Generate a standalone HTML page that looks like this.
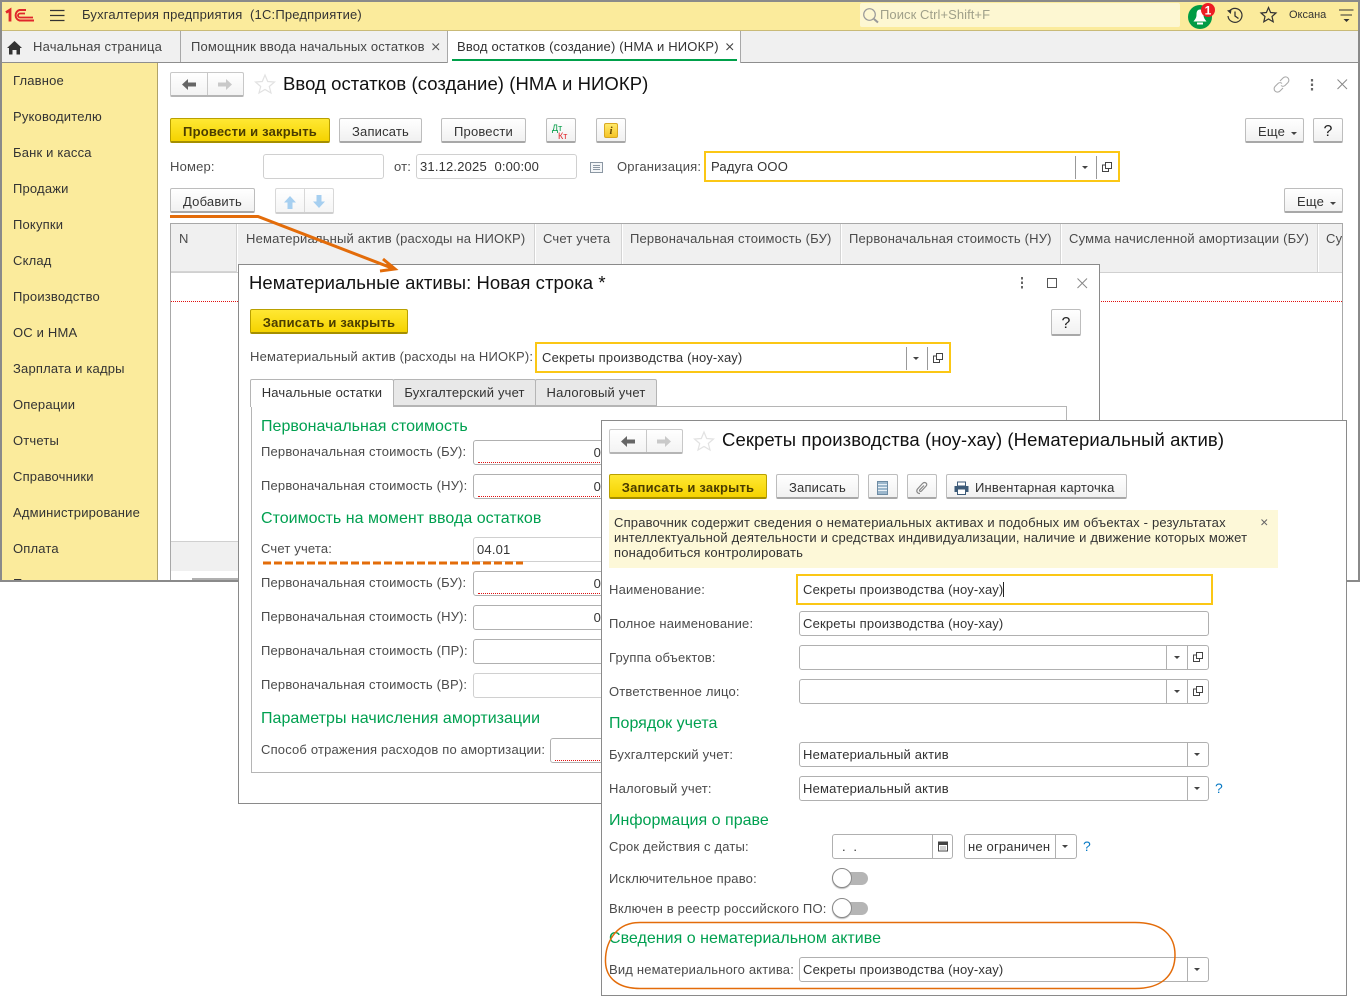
<!DOCTYPE html>
<html lang="ru"><head><meta charset="utf-8"><title>Ввод остатков</title>
<style>
html,body{margin:0;padding:0;background:#fff;width:1360px;height:998px;overflow:hidden}
*{box-sizing:border-box}
body{position:relative;font-family:"Liberation Sans",sans-serif;font-size:13px;color:#4b4b4b}
.a,.t,.b,.f,.h{position:absolute}
.t{white-space:nowrap;line-height:16px;height:16px;letter-spacing:.18px}
.dk{color:#333}
.h{white-space:nowrap;line-height:20px;font-size:16px;color:#00a050;letter-spacing:.02px}
.ti{position:absolute;white-space:nowrap;font-size:18.5px;line-height:24px;color:#111;letter-spacing:.07px}
.b{height:25px;border:1px solid #bdbdbd;border-bottom:2px solid #a8a8a8;border-radius:2px;background:linear-gradient(#fff,#f1f1f1);text-align:center;line-height:25px;color:#333;white-space:nowrap;letter-spacing:.18px}
.y{background:linear-gradient(#ffe833,#f5d300);border:1px solid #b9a000;border-bottom:2px solid #a58f00;font-weight:bold;color:#4a3c00;letter-spacing:.2px}
.f{height:25px;border:1px solid #b0b0b0;border-radius:3px;background:#fff;color:#333;line-height:23px;padding-left:3px;white-space:nowrap;letter-spacing:.18px;overflow:hidden}
.lt{border-color:#d0d0d0}
.foc{border:2px solid #fbc715;border-radius:0;height:31px;line-height:27px;padding-left:5px;background:#fff;position:absolute;color:#333;white-space:nowrap;letter-spacing:.18px}
.s{position:absolute;top:0;bottom:0;width:1px;background:#b0b0b0}
.ar{position:absolute;width:0;height:0;border-left:3px solid transparent;border-right:3px solid transparent;border-top:3px solid #444}
.red{position:absolute;left:4px;right:0;bottom:1px;border-bottom:1px dotted #e01010}
.th{position:absolute;top:224px;height:48px;background:#f0f0f0;border-right:1px solid #d4d4d4;border-left:1px solid #fff;color:#4b4b4b;line-height:16px;padding:7px 0 0 7px;white-space:nowrap;letter-spacing:.18px;overflow:hidden}
.q{color:#0a7ac4;font-size:14px}
.tg{position:absolute;width:36px;height:20px}
svg{position:absolute;overflow:visible}
</style></head><body>

<!-- main window -->
<div class="a" style="left:0;top:0;width:1360px;height:582px;overflow:hidden;background:#fff">
  <div class="a" style="left:0;top:0;width:1360px;height:31px;background:#fbeb9c;border-bottom:1px solid #c9ba77"></div>
  <svg style="left:0;top:0" width="40" height="30"><g fill="none" stroke="#e0262b"><path d="M6 12.500 10 10V21.500" stroke-width="2.800"/><path d="M26 10H19.500A5.500 5.500 0 0 0 19.500 20.500H34" stroke-width="2"/><path d="M25 13.500H20A2 2 0 0 0 20 17.500H33" stroke-width="1.800"/></g></svg>
  <svg style="left:50px;top:9px" width="15" height="13"><path d="M0 1.500H14.500M0 6.500H14.500M0 11.500H14.500" stroke="#333" stroke-width="1.200"/></svg>
  <div class="t dk" style="left:82px;top:7px">Бухгалтерия предприятия&nbsp; (1С:Предприятие)</div>
  <div class="a" style="left:860px;top:3px;width:320px;height:24px;background:#fdf7d2;border-radius:2px"></div>
  <svg style="left:862px;top:7px" width="18" height="17"><circle cx="7.500" cy="7.500" r="5.800" fill="none" stroke="#999" stroke-width="1.200"/><path d="M12 12 16 15.500" stroke="#999" stroke-width="2"/></svg>
  <div class="t" style="left:880px;top:7px;color:#a0a08a;letter-spacing:.06px">Поиск Ctrl+Shift+F</div>
  <svg style="left:1188px;top:2px" width="30" height="26"><circle cx="12" cy="15" r="12" fill="#009b45"/><path d="M12 7.500C9 7.500 8.500 10 8.500 13C8.500 16 6.500 18 5.500 19.500H18.500C17.500 18 15.500 16 15.500 13C15.500 10 15 7.500 12 7.500Z" fill="#fff"/><rect x="9" y="20.500" width="6" height="2" fill="#fff"/><circle cx="20" cy="8" r="7" fill="#ed1c24"/><text x="20" y="12.500" font-family="Liberation Sans" font-size="12" font-weight="bold" fill="#fff" text-anchor="middle">1</text></svg>
  <svg style="left:1226px;top:7px" width="18" height="17"><path d="M3.500 4A7 7 0 1 1 2 9" fill="none" stroke="#333" stroke-width="1.200"/><path d="M1 3.500 5.500 2.500 4.800 7Z" fill="#333"/><path d="M9 4.500V9L12.500 11.500" fill="none" stroke="#333" stroke-width="1.300"/></svg>
  <svg style="left:1260px;top:6px" width="17" height="17"><path d="M8.500 1.500 10.600 6.500 16 7 12 10.500 13.200 15.800 8.500 13 3.800 15.800 5 10.500 1 7 6.400 6.500Z" fill="none" stroke="#333" stroke-width="1.200"/></svg>
  <div class="t" style="left:1289px;top:7px;font-size:11px;color:#333;letter-spacing:0">Оксана</div>
  <svg style="left:1339px;top:9px" width="15" height="14"><path d="M0 1H14.500M1.500 6H13" stroke="#333" stroke-width="1.100"/><path d="M4.500 10H10.500L7.500 13Z" fill="#333"/></svg>

  <!-- tabs -->
  <div class="a" style="left:0;top:31px;width:1360px;height:32px;background:#f0f0f0;border-bottom:1px solid #8e8e8e"></div>
  <svg style="left:7px;top:41px" width="16" height="14"><path d="M7.500 0 15 7H13V13.500H9.500V9H5.500V13.500H2V7H0Z" fill="#333"/></svg>
  <div class="t" style="left:33px;top:39px;color:#444">Начальная страница</div>
  <div class="a" style="left:180px;top:31px;width:1px;height:31px;background:#a8a8a8"></div>
  <div class="t" style="left:191px;top:39px;color:#444">Помощник ввода начальных остатков</div>
  <svg style="left:432px;top:43px" width="8" height="8"><path d="M.5.500 7 7M7 .500.500 7" stroke="#555" stroke-width="1.100"/></svg>
  <div class="a" style="left:447px;top:31px;width:294px;height:32px;background:#fff;border-left:1px solid #a8a8a8;border-right:1px solid #a8a8a8"></div>
  <div class="t" style="left:457px;top:39px;color:#333">Ввод остатков (создание) (НМА и НИОКР)</div>
  <svg style="left:726px;top:43px" width="8" height="8"><path d="M.5.500 7 7M7 .500.500 7" stroke="#444" stroke-width="1.100"/></svg>
  <div class="a" style="left:452px;top:59px;width:285px;height:2px;background:#00a04a"></div>

  <!-- sidebar -->
  <div class="a" style="left:0;top:63px;width:158px;height:519px;background:#fbeb9c;border-right:1px solid #b1a368;overflow:hidden">
    <div class="t dk" style="left:13px;top:10px">Главное</div>
    <div class="t dk" style="left:13px;top:46px">Руководителю</div>
    <div class="t dk" style="left:13px;top:82px">Банк и касса</div>
    <div class="t dk" style="left:13px;top:118px">Продажи</div>
    <div class="t dk" style="left:13px;top:154px">Покупки</div>
    <div class="t dk" style="left:13px;top:190px">Склад</div>
    <div class="t dk" style="left:13px;top:226px">Производство</div>
    <div class="t dk" style="left:13px;top:262px">ОС и НМА</div>
    <div class="t dk" style="left:13px;top:298px">Зарплата и кадры</div>
    <div class="t dk" style="left:13px;top:334px">Операции</div>
    <div class="t dk" style="left:13px;top:370px">Отчеты</div>
    <div class="t dk" style="left:13px;top:406px">Справочники</div>
    <div class="t dk" style="left:13px;top:442px">Администрирование</div>
    <div class="t dk" style="left:13px;top:478px">Оплата</div>
    <div class="t dk" style="left:13px;top:513px">Подключаемое</div>
  </div>

  <!-- form header -->
  <div class="a" style="left:170px;top:72px;width:74px;height:25px;border:1px solid #c8c8c8;border-bottom:2px solid #b5b5b5;border-radius:2px;background:linear-gradient(#fff,#f3f3f3)"></div>
  <div class="a" style="left:207px;top:73px;width:1px;height:22px;background:#c8c8c8"></div>
  <svg style="left:182px;top:79px" width="14" height="11"><path d="M6 0V3.500H14V7.500H6V11L0 5.500Z" fill="#666"/></svg>
  <svg style="left:218px;top:79px" width="14" height="11"><path d="M8 0V3.500H0V7.500H8V11L14 5.500Z" fill="#c9c9c9"/></svg>
  <svg style="left:255px;top:74px" width="20" height="20"><path d="M10 1 12.700 7.500 19.500 8 14.300 12.500 16 19 10 15.500 4 19 5.700 12.500.5 8 7.300 7.500Z" fill="#fff" stroke="#e2e2e2" stroke-width="1.200"/></svg>
  <div class="ti" style="left:283px;top:72px">Ввод остатков (создание) (НМА и НИОКР)</div>
  <svg style="left:1273px;top:76px" width="17" height="17" fill="none" stroke="#aaa" stroke-width="1.100"><path d="M7 5 10 2A3 3 0 0 1 15 6.500L12 9.500A3 3 0 0 1 8 9.500"/><path d="M10 12 7 15A3 3 0 0 1 2 10.500L5 7.500A3 3 0 0 1 9 7.500"/></svg>
  <svg style="left:1310px;top:79px" width="4" height="12"><path d="M2 0V2.500M2 4.500V7M2 9V11.500" stroke="#666" stroke-width="2.200"/></svg>
  <svg style="left:1337px;top:79px" width="11" height="11"><path d="M.5.500 10 10M10 .500.500 10" stroke="#888"/></svg>

  <div class="b y" style="left:170px;top:118px;width:160px">Провести и закрыть</div>
  <div class="b" style="left:339px;top:118px;width:83px">Записать</div>
  <div class="b" style="left:441px;top:118px;width:85px">Провести</div>
  <div class="b" style="left:546px;top:118px;width:30px"></div>
  <div class="a" style="left:552px;top:124px;font-size:9px;line-height:8px;color:#009b45">Дт</div>
  <div class="a" style="left:558px;top:132px;font-size:9px;line-height:8px;color:#e0262b">Кт</div>
  <div class="b" style="left:596px;top:118px;width:30px"></div>
  <div class="a" style="left:604px;top:123px;width:14px;height:15px;border-radius:2px;background:linear-gradient(#ffe96a,#f5c427);border:1px solid #d8a821;text-align:center;font:italic bold 11px/14px 'Liberation Serif',serif;color:#6a4a00">i</div>
  <div class="b" style="left:1245px;top:118px;width:59px;text-align:left;padding-left:12px">Еще</div><div class="ar" style="left:1291px;top:132px"></div>
  <div class="b" style="left:1313px;top:118px;width:30px;font-size:16px;color:#222">?</div>

  <div class="t" style="left:170px;top:159px">Номер:</div>
  <div class="f lt" style="left:263px;top:154px;width:121px"></div>
  <div class="t" style="left:394px;top:159px">от:</div>
  <div class="f lt" style="left:416px;top:154px;width:161px">31.12.2025&nbsp; 0:00:00</div>
  <svg style="left:590px;top:162px" width="13" height="11"><rect x=".5" y=".5" width="12" height="10" fill="#f4f6f8" stroke="#8b97a3"/><path d="M3 3.500H10M3 5.500H10M3 7.500H10" stroke="#8b97a3"/></svg>
  <div class="t" style="left:617px;top:159px">Организация:</div>
  <div class="foc" style="left:704px;top:151px;width:416px">Радуга ООО
    <div class="a" style="left:369px;top:3px;width:1px;height:23px;background:#999"></div>
    <div class="a" style="left:390px;top:3px;width:1px;height:23px;background:#999"></div>
    <div class="ar" style="left:376px;top:13px"></div>
    <svg style="left:396px;top:9px" width="10" height="10" fill="none" stroke="#444"><rect x="3.500" y=".5" width="6" height="6"/><path d="M3 3H.5V9.500H6.500V7"/></svg>
  </div>

  <div class="b" style="left:170px;top:188px;width:85px">Добавить</div>
  <div class="a" style="left:275px;top:188px;width:59px;height:26px;border:1px solid #d8d8d8;border-bottom:2px solid #cfcfcf;border-radius:2px;background:linear-gradient(#fff,#f5f5f5)"></div>
  <div class="a" style="left:304px;top:189px;width:1px;height:23px;background:#d8d8d8"></div>
  <svg style="left:284px;top:196px" width="12" height="13"><path d="M6 0 12 6.500H8.500V13H3.500V6.500H0Z" fill="#a6cff0"/></svg>
  <svg style="left:313px;top:195px" width="12" height="13"><path d="M6 13 12 6.500H8.500V0H3.500V6.500H0Z" fill="#a6cff0"/></svg>
  <div class="b" style="left:1284px;top:188px;width:59px;text-align:left;padding-left:12px">Еще</div><div class="ar" style="left:1330px;top:202px"></div>

  <!-- table -->
  <div class="a" style="left:170px;top:223px;width:1173px;height:359px;border:1px solid #a8a8a8;border-bottom:0;overflow:hidden"></div>
  <div class="a" style="left:171px;top:224px;width:66px;height:48px;background:#f0f0f0;border-right:1px solid #d4d4d4;border-bottom:1px solid #d4d4d4;padding:7px 0 0 8px;line-height:16px;letter-spacing:.18px">N</div>
  <div class="th" style="left:237px;width:298px;padding-left:8px">Нематериальный актив (расходы на НИОКР)</div>
  <div class="th" style="left:535px;width:87px">Счет учета</div>
  <div class="th" style="left:622px;width:219px">Первоначальная стоимость (БУ)</div>
  <div class="th" style="left:841px;width:220px">Первоначальная стоимость (НУ)</div>
  <div class="th" style="left:1061px;width:257px">Сумма начисленной амортизации (БУ)</div>
  <div class="th" style="left:1318px;width:24px;border-right:0">Су</div>
  <div class="a" style="left:171px;top:272px;width:1171px;height:1px;background:#d0d0d0"></div>
  <div class="a" style="left:171px;top:301px;width:1171px;border-bottom:1px dotted #e01010"></div>
  <div class="a" style="left:171px;top:541px;width:68px;height:30px;background:#f0f0f0;border-top:1px solid #d0d0d0"></div>
  <div class="a" style="left:192px;top:578px;width:48px;height:3px;background:#b0b0b0"></div>

  <!-- window border -->
  <div class="a" style="left:0;top:0;width:1360px;height:582px;border:2px solid #8a8a8a;pointer-events:none"></div>
</div>

<!-- dialog 1 -->
<div class="a" style="left:238px;top:264px;width:862px;height:540px;background:#fff;border:1px solid #8a8a8a"></div>
<div class="ti" style="left:249px;top:271px">Нематериальные активы: Новая строка *</div>
<svg style="left:1020px;top:277px" width="4" height="12"><path d="M2 0V2.500M2 4.500V7M2 9V11.500" stroke="#666" stroke-width="2"/></svg>
<div class="a" style="left:1047px;top:278px;width:10px;height:10px;border:1px solid #555"></div>
<svg style="left:1077px;top:278px" width="11" height="11"><path d="M.5.500 10 10M10 .500.500 10" stroke="#888"/></svg>
<div class="b y" style="left:250px;top:309px;width:158px">Записать и закрыть</div>
<div class="b" style="left:1051px;top:309px;width:30px;height:27px;line-height:27px;font-size:16px;color:#222">?</div>
<div class="t" style="left:250px;top:349px">Нематериальный актив (расходы на НИОКР):</div>
<div class="foc" style="left:535px;top:342px;width:416px">Секреты производства (ноу-хау)
  <div class="a" style="left:369px;top:3px;width:1px;height:23px;background:#999"></div>
  <div class="a" style="left:390px;top:3px;width:1px;height:23px;background:#999"></div>
  <div class="ar" style="left:376px;top:13px"></div>
  <svg style="left:396px;top:9px" width="10" height="10" fill="none" stroke="#444"><rect x="3.500" y=".5" width="6" height="6"/><path d="M3 3H.5V9.500H6.500V7"/></svg>
</div>
<!-- tabs d1 -->
<div class="a" style="left:251px;top:406px;width:816px;height:367px;border:1px solid #b5b5b5"></div>
<div class="a" style="left:393px;top:379px;width:143px;height:27px;background:#e8e8e8;border:1px solid #b5b5b5;border-radius:2px 2px 0 0;line-height:25px;text-align:center;color:#333;letter-spacing:.18px">Бухгалтерский учет</div>
<div class="a" style="left:535px;top:379px;width:122px;height:27px;background:#e8e8e8;border:1px solid #b5b5b5;border-radius:2px 2px 0 0;line-height:25px;text-align:center;color:#333;letter-spacing:.18px">Налоговый учет</div>
<div class="a" style="left:250px;top:379px;width:144px;height:28px;background:#fff;border:1px solid #b5b5b5;border-bottom:0;border-radius:2px 2px 0 0;line-height:26px;text-align:center;color:#333;letter-spacing:.18px">Начальные остатки</div>

<div class="h" style="left:261px;top:417px">Первоначальная стоимость</div>
<div class="t" style="left:261px;top:444px">Первоначальная стоимость (БУ):</div>
<div class="f" style="left:473px;top:440px;width:140px;text-align:right;padding-right:11px">0<div class="red"></div></div>
<div class="t" style="left:261px;top:478px">Первоначальная стоимость (НУ):</div>
<div class="f" style="left:473px;top:474px;width:140px;text-align:right;padding-right:11px">0<div class="red"></div></div>
<div class="h" style="left:261px;top:509px">Стоимость на момент ввода остатков</div>
<div class="t" style="left:261px;top:541px">Счет учета:</div>
<div class="f lt" style="left:473px;top:537px;width:140px">04.01</div>
<div class="t" style="left:261px;top:575px">Первоначальная стоимость (БУ):</div>
<div class="f" style="left:473px;top:571px;width:140px;text-align:right;padding-right:11px">0<div class="red"></div></div>
<div class="t" style="left:261px;top:609px">Первоначальная стоимость (НУ):</div>
<div class="f" style="left:473px;top:605px;width:140px;text-align:right;padding-right:11px">0</div>
<div class="t" style="left:261px;top:643px">Первоначальная стоимость (ПР):</div>
<div class="f" style="left:473px;top:639px;width:140px"></div>
<div class="t" style="left:261px;top:677px">Первоначальная стоимость (ВР):</div>
<div class="f lt" style="left:473px;top:673px;width:140px"></div>
<div class="h" style="left:261px;top:709px">Параметры начисления амортизации</div>
<div class="t" style="left:261px;top:742px">Способ отражения расходов по амортизации:</div>
<div class="f" style="left:550px;top:738px;width:63px"><div class="red"></div></div>

<!-- annotations over main/dialog 1 -->
<svg style="left:0;top:0" width="1360" height="998"><path d="M170 216.500H258L393 268.500M383 259 395 269 380 271" fill="none" stroke="#e36c0a" stroke-width="3"/><path d="M263 563H523" stroke="#e36c0a" stroke-width="3" stroke-dasharray="8 3"/></svg>

<!-- dialog 2 -->
<div class="a" style="left:601px;top:420px;width:746px;height:576px;background:#fff;border:1px solid #8a8a8a"></div>
<div class="a" style="left:609px;top:429px;width:74px;height:25px;border:1px solid #c8c8c8;border-bottom:2px solid #b5b5b5;border-radius:2px;background:linear-gradient(#fff,#f3f3f3)"></div>
<div class="a" style="left:646px;top:430px;width:1px;height:22px;background:#c8c8c8"></div>
<svg style="left:621px;top:436px" width="14" height="11"><path d="M6 0V3.500H14V7.500H6V11L0 5.500Z" fill="#666"/></svg>
<svg style="left:657px;top:436px" width="14" height="11"><path d="M8 0V3.500H0V7.500H8V11L14 5.500Z" fill="#c9c9c9"/></svg>
<svg style="left:694px;top:431px" width="20" height="20"><path d="M10 1 12.700 7.500 19.500 8 14.300 12.500 16 19 10 15.500 4 19 5.700 12.500.5 8 7.300 7.500Z" fill="#fff" stroke="#e2e2e2" stroke-width="1.200"/></svg>
<div class="ti" style="left:722px;top:428px;letter-spacing:.09px">Секреты производства (ноу-хау) (Нематериальный актив)</div>
<div class="b y" style="left:609px;top:474px;width:158px">Записать и закрыть</div>
<div class="b" style="left:776px;top:474px;width:83px">Записать</div>
<div class="b" style="left:868px;top:474px;width:30px"></div>
<svg style="left:877px;top:481px" width="12" height="15"><rect x=".5" y=".5" width="10" height="13" fill="#9cb7cc" stroke="#6d8ba3"/><path d="M1 3.500H10M1 6.500H10M1 9.500H10" stroke="#e8f0f6"/></svg>
<div class="b" style="left:907px;top:474px;width:30px"></div>
<svg style="left:915px;top:481px" width="14" height="13" fill="none" stroke="#888" stroke-width="1.200"><path d="M5 12.500C2 12.500 1 10 2.500 8L7.500 2.500C9.500.5 12.500 2 11.500 4.500L6.500 10C5.500 11 4 10 4.800 8.800L9 4.500"/></svg>
<div class="b" style="left:946px;top:474px;width:181px;text-align:left;padding-left:28px">Инвентарная карточка</div>
<svg style="left:954px;top:481px" width="15" height="14"><rect x="3.500" y="1" width="8" height="4" fill="#fff" stroke="#3c5a78"/><rect x=".5" y="5" width="14" height="6" fill="#3c5a78"/><rect x="3.500" y="8" width="8" height="5.500" fill="#fff" stroke="#3c5a78"/></svg>

<div class="a" style="left:609px;top:510px;width:669px;height:58px;background:#fdf8d8"></div>
<div class="t dk" style="left:614px;top:515px">Справочник содержит сведения о нематериальных активах и подобных им объектах - результатах</div>
<div class="t dk" style="left:614px;top:530px">интеллектуальной деятельности и средствах индивидуализации, наличие и движение которых может</div>
<div class="t dk" style="left:614px;top:545px">понадобиться контролировать</div>
<svg style="left:1261px;top:519px" width="7" height="7"><path d="M.5.500 6 6M6 .500.500 6" stroke="#666"/></svg>

<div class="t" style="left:609px;top:582px">Наименование:</div>
<div class="foc" style="left:796px;top:574px;width:417px;height:31px;line-height:27px">Секреты производства (ноу-хау)<span style="display:inline-block;width:1px;height:15px;background:#222;vertical-align:-3px"></span></div>
<div class="t" style="left:609px;top:616px">Полное наименование:</div>
<div class="f" style="left:799px;top:611px;width:410px">Секреты производства (ноу-хау)</div>

<div class="t" style="left:609px;top:650px">Группа объектов:</div>
<div class="f" style="left:799px;top:645px;width:410px"><div class="s" style="left:366px"></div><div class="s" style="left:387px"></div><div class="ar" style="left:374px;top:10px"></div><svg style="left:393px;top:6px" width="10" height="10" fill="none" stroke="#444"><rect x="3.500" y=".5" width="6" height="6"/><path d="M3 3H.5V9.500H6.500V7"/></svg></div>
<div class="t" style="left:609px;top:684px">Ответственное лицо:</div>
<div class="f" style="left:799px;top:679px;width:410px"><div class="s" style="left:366px"></div><div class="s" style="left:387px"></div><div class="ar" style="left:374px;top:10px"></div><svg style="left:393px;top:6px" width="10" height="10" fill="none" stroke="#444"><rect x="3.500" y=".5" width="6" height="6"/><path d="M3 3H.5V9.500H6.500V7"/></svg></div>

<div class="h" style="left:609px;top:714px">Порядок учета</div>
<div class="t" style="left:609px;top:747px">Бухгалтерский учет:</div>
<div class="f" style="left:799px;top:742px;width:410px">Нематериальный актив<div class="s" style="left:387px"></div><div class="ar" style="left:394px;top:10px"></div></div>
<div class="t" style="left:609px;top:781px">Налоговый учет:</div>
<div class="f" style="left:799px;top:776px;width:410px">Нематериальный актив<div class="s" style="left:387px"></div><div class="ar" style="left:394px;top:10px"></div></div>
<div class="t q" style="left:1215px;top:780px">?</div>

<div class="h" style="left:609px;top:811px">Информация о праве</div>
<div class="t" style="left:609px;top:839px">Срок действия с даты:</div>
<div class="f" style="left:832px;top:834px;width:121px;padding-left:9px">.&nbsp; .<div class="s" style="left:99px"></div><svg style="left:105px;top:5px" width="11" height="12"><rect x=".5" y="2" width="9" height="9" fill="#fff" stroke="#444"/><rect x=".5" y="2" width="9" height="3" fill="#444"/><path d="M2.500 7H3.500M4.500 7H5.500M6.500 7H7.500M2.500 9H3.500M4.500 9H5.500M6.500 9H7.500" stroke="#444"/></svg></div>
<div class="f" style="left:964px;top:834px;width:113px">не ограничен<div class="s" style="left:90px"></div><div class="ar" style="left:97px;top:10px"></div></div>
<div class="t q" style="left:1083px;top:838px">?</div>

<div class="t" style="left:609px;top:871px">Исключительное право:</div>
<div class="tg" style="left:832px;top:868px"><div class="a" style="left:10px;top:4px;width:26px;height:13px;border-radius:7px;background:#b5b5b5"></div><div class="a" style="left:0;top:0;width:20px;height:20px;border-radius:50%;background:#fff;border:1px solid #8a8a8a;box-shadow:0 1px 1px #bbb"></div></div>
<div class="t" style="left:609px;top:901px">Включен в реестр российского ПО:</div>
<div class="tg" style="left:832px;top:898px"><div class="a" style="left:10px;top:4px;width:26px;height:13px;border-radius:7px;background:#b5b5b5"></div><div class="a" style="left:0;top:0;width:20px;height:20px;border-radius:50%;background:#fff;border:1px solid #8a8a8a;box-shadow:0 1px 1px #bbb"></div></div>

<div class="h" style="left:609px;top:929px">Сведения о нематериальном активе</div>
<div class="t" style="left:609px;top:962px">Вид нематериального актива:</div>
<div class="f" style="left:799px;top:957px;width:410px">Секреты производства (ноу-хау)<div class="s" style="left:387px"></div><div class="ar" style="left:394px;top:10px"></div></div>
<svg style="left:0;top:0" width="1360" height="998"><path d="M640 922.500H1135C1163 922.500 1175 936 1175 955C1175 975 1162 988.500 1135 988.500H640C618 988.500 606 978 605.500 962C605 945 614 922.500 640 922.500Z" fill="none" stroke="#e36c0a" stroke-width="1.500"/></svg>
</body></html>
